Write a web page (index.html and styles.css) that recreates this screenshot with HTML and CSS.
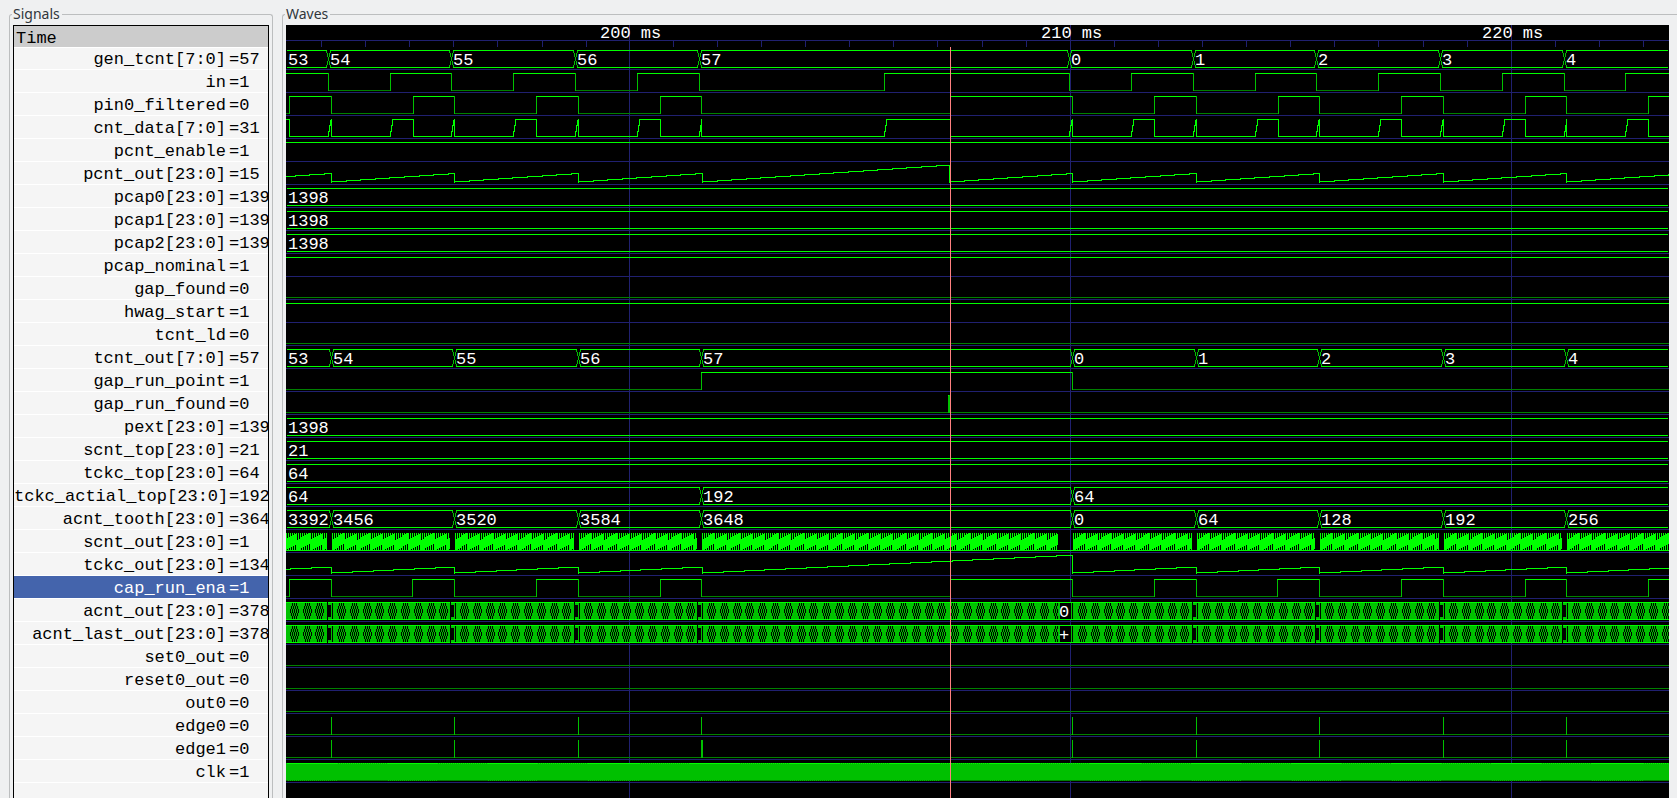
FILE: index.html
```html
<!DOCTYPE html>
<html lang="en">
<head>
<meta charset="utf-8">
<title>Waves</title>
<link rel="stylesheet" href="styles.css">
</head>
<body>
<main class="viewer">
  <fieldset class="frame frame-signals">
    <legend class="frame-title">Signals</legend>
    <div class="signal-list">
      <table class="signals">
        <colgroup><col class="col-name"><col class="col-value"></colgroup>
        <thead><tr><th colspan="2">Time</th></tr></thead>
        <tbody>
          <tr><td>gen_tcnt[7:0]</td><td>=57</td></tr>
          <tr><td>in</td><td>=1</td></tr>
          <tr><td>pin0_filtered</td><td>=0</td></tr>
          <tr><td>cnt_data[7:0]</td><td>=31</td></tr>
          <tr><td>pcnt_enable</td><td>=1</td></tr>
          <tr><td>pcnt_out[23:0]</td><td>=15</td></tr>
          <tr><td>pcap0[23:0]</td><td>=139</td></tr>
          <tr><td>pcap1[23:0]</td><td>=139</td></tr>
          <tr><td>pcap2[23:0]</td><td>=139</td></tr>
          <tr><td>pcap_nominal</td><td>=1</td></tr>
          <tr><td>gap_found</td><td>=0</td></tr>
          <tr><td>hwag_start</td><td>=1</td></tr>
          <tr><td>tcnt_ld</td><td>=0</td></tr>
          <tr><td>tcnt_out[7:0]</td><td>=57</td></tr>
          <tr><td>gap_run_point</td><td>=1</td></tr>
          <tr><td>gap_run_found</td><td>=0</td></tr>
          <tr><td>pext[23:0]</td><td>=139</td></tr>
          <tr><td>scnt_top[23:0]</td><td>=21</td></tr>
          <tr><td>tckc_top[23:0]</td><td>=64</td></tr>
          <tr><td>tckc_actial_top[23:0]</td><td>=192</td></tr>
          <tr><td>acnt_tooth[23:0]</td><td>=364</td></tr>
          <tr><td>scnt_out[23:0]</td><td>=1</td></tr>
          <tr><td>tckc_out[23:0]</td><td>=134</td></tr>
          <tr class="selected"><td>cap_run_ena</td><td>=1</td></tr>
          <tr><td>acnt_out[23:0]</td><td>=378</td></tr>
          <tr><td>acnt_last_out[23:0]</td><td>=378</td></tr>
          <tr><td>set0_out</td><td>=0</td></tr>
          <tr><td>reset0_out</td><td>=0</td></tr>
          <tr><td>out0</td><td>=0</td></tr>
          <tr><td>edge0</td><td>=0</td></tr>
          <tr><td>edge1</td><td>=0</td></tr>
          <tr><td>clk</td><td>=1</td></tr>
        </tbody>
      </table>
    </div>
  </fieldset>
  <fieldset class="frame frame-waves">
    <legend class="frame-title">Waves</legend>
    <svg class="waves" id="waves" role="img" aria-label="Signal waveforms"></svg>
  </fieldset>
</main>
<script src="waves.js"></script>
</body>
</html>
```
FILE: styles.css
```css
* {
  box-sizing: border-box;
}

body {
  margin: 0;
  background: #eff0f1;
  color: #000;
  overflow: hidden;
}

.viewer {
  display: flex;
  gap: 9px;
  height: 100vh;
  padding: 4px 0 0 9px;
}

.frame {
  margin: 0;
  min-width: 0;
  border: 1px solid #bcbebf;
  border-bottom: 0;
  border-radius: 3px 3px 0 0;
  padding: 1px 3px 0;
}

.frame-signals {
  flex: none;
  width: 264px;
}

.frame-waves {
  flex: 1;
  border-right: 0;
  border-top-right-radius: 0;
  padding-right: 8px;
}

.frame-title {
  margin-left: -1px;
  padding: 0 2px 0 1px;
  font: 14px/20px "Noto Sans", sans-serif;
  color: #31363b;
}

.signal-list {
  height: 100%;
  overflow: hidden;
  border: 1px solid #000;
  border-bottom: 0;
  background: #f5f5f5;
}

.signals {
  width: 100%;
  table-layout: fixed;
  border-collapse: separate;
  border-spacing: 0;
  font: 17px/19px "Liberation Mono", monospace;
}

.col-name {
  width: 215px;
}

.signals th {
  height: 22px;
  padding: 4px 0 0 2px;
  border-bottom: 1px solid #fff;
  background: #ccc;
  font-weight: normal;
  line-height: 17px;
  text-align: left;
}

.signals td {
  padding: 3px 0 0;
  border-bottom: 1px solid #fff;
  white-space: nowrap;
}

.signals td:first-child {
  padding-right: 3px;
  text-align: right;
}

.signals tbody tr:first-child td {
  padding-top: 2px;
}

.signals .selected td {
  background: #4464ac;
  color: #fff;
}

.waves {
  display: block;
  width: 100%;
  height: 100%;
  background: #000;
}

.waves path {
  fill: none;
  stroke-width: 1;
  shape-rendering: crispEdges;
}

.waves rect {
  shape-rendering: crispEdges;
}

.waves text {
  font: 17px "Liberation Mono", monospace;
  fill: #fff;
}

.waves .grid { stroke: #202070; }
.waves .high { stroke: #00ff00; }
.waves .edge { stroke: #00c000; }
.waves .low { stroke: #008000; }
.waves .cursor { stroke: #ff8080; }
.waves .void { stroke: #000; }
.waves .body { fill: #00c000; }
.waves .blank { fill: #000; }
```
FILE: waves.js
```js
const NS = "http://www.w3.org/2000/svg";
const svg = document.getElementById("waves");
const LEFT = 286;
const TOP = 25;
const RIGHT = LEFT + svg.clientWidth;
const BOTTOM = TOP + svg.clientHeight;
const PITCH = 23;

const root = document.createElementNS(NS, "g");
root.setAttribute("transform", `translate(${-LEFT} ${-TOP})`);
svg.appendChild(root);

function add(name, attrs, text) {
  const node = document.createElementNS(NS, name);
  for (const key in attrs) node.setAttribute(key, attrs[key]);
  if (text !== undefined) node.textContent = text;
  root.appendChild(node);
}

// Strokes are collected per colour, then flushed as one path.
let pen = {};
function h(cls, x1, x2, y) {
  pen[cls] = (pen[cls] || "") + `M${x1} ${y + 0.5}H${x2}`;
}
function v(cls, x, y1, y2) {
  pen[cls] = (pen[cls] || "") + `M${x + 0.5} ${Math.min(y1, y2)}V${Math.max(y1, y2) + 1}`;
}
function flush() {
  for (const cls of ["grid", "low", "edge", "high", "void", "cursor"]) {
    if (pen[cls]) add("path", { class: cls, d: pen[cls] });
  }
  pen = {};
}

const topOf = row => 50 + PITCH * row;
const bottomOf = row => 67 + PITCH * row;

// Event positions on the time axis.
const inFall = [328, 451, 575, 699, 1069, 1193, 1316, 1440, 1564];
const inRise = [390, 513, 637, 884, 1131, 1255, 1378, 1502, 1625];
const capFall = [331, 454, 578, 701, 1072, 1196, 1319, 1443, 1566];
const capRise = [289, 413, 536, 660, 950, 1154, 1278, 1401, 1525, 1648];
const enaRise = [289, 412, 536, 660, 950, 1154, 1277, 1401, 1525, 1648];

function digital(row, rises, falls, startHigh) {
  const events = [...rises.map(x => [x, 1]), ...falls.map(x => [x, 0])].sort((a, b) => a[0] - b[0]);
  let x = LEFT;
  let level = startHigh;
  for (const [at, next] of [...events, [RIGHT, null]]) {
    h(level ? "high" : "low", x, at, level ? topOf(row) : bottomOf(row));
    if (next !== null) v("edge", at, topOf(row), bottomOf(row));
    x = at;
    level = next;
  }
}

function bus(row, values, changes) {
  const t = topOf(row), b = bottomOf(row);
  let x = LEFT + 1;
  [...changes, RIGHT + 1].forEach((at, i) => {
    const end = i < changes.length ? at - 1 : RIGHT - 1;
    h("high", x, end, t);
    h("high", x, end, b);
    if (i < changes.length) {
      const steps = [[-2, 0, 2], [-1, 3, 6], [0, 7, 10], [1, 11, 14], [2, 15, 17]];
      for (const [dx, y1, y2] of steps) {
        v("edge", at + dx, t + y1, t + y2);
        v("edge", at - dx, t + y1, t + y2);
      }
      x = at + 2;
    }
  });
  values.forEach((value, i) => {
    labels.push([i ? changes[i - 1] + 2 : LEFT + 2, b - 2, value]);
  });
}

// Rising staircase that drops back at every reset.
function stairs(row, resets, step, base, first) {
  const starts = [first, ...resets];
  starts.forEach((start, i) => {
    const end = i + 1 < starts.length ? starts[i + 1] : RIGHT;
    let y = base;
    let x = start;
    for (let k = 1; x < end; k++) {
      const next = Math.min(Math.round(start + step * k), end);
      if (next > LEFT) h("high", Math.max(x, LEFT), next + (next < end ? 1 : 0), y);
      x = next;
      y -= 1;
    }
    if (end < RIGHT) v("high", end, y + 1, bottomOf(row));
  });
}

const labels = [];

// Time grid
h("grid", LEFT, RIGHT, 40);
for (const x of [321, 365, 409, 453, 497, 542, 586, 673, 717, 761, 805, 849, 893, 937, 982, 1026,
  1114, 1158, 1202, 1246, 1290, 1334, 1378, 1423, 1467, 1555, 1599, 1643]) v("grid", x, 40, 46);
for (const x of [629, 1070, 1511]) v("grid", x, TOP, BOTTOM);
for (let row = 0; row < 32; row++) h("grid", LEFT, RIGHT, 69 + PITCH * row);
flush();
labels.push([600, 38, "200 ms"], [1041, 38, "210 ms"], [1482, 38, "220 ms"]);

const teeth = ["53", "54", "55", "56", "57", "0", "1", "2", "3", "4"];
bus(0, teeth, inFall);
digital(1, inRise, inFall, 1);
digital(2, capRise, capFall, 0);

// cnt_data: short ramps at each input edge
{
  const t = topOf(3), b = bottomOf(3);
  h("high", LEFT, 290, t);
  v("high", 289, t, b);
  let x = 289;
  const events = [...inFall.map(e => [e, 0]), ...inRise.map(e => [e, 1])].sort((p, q) => p[0] - q[0]);
  for (const [at, rising] of events) {
    h("high", x, at + 1, b);
    v("high", at, b - 5, b);
    v("high", at + 1, b - 11, b - 5);
    v("high", at + 2, t + 1, b - 11);
    const until = rising ? capRise.find(c => c > at) : capFall.find(c => c > at);
    if (rising) h("high", at + 2, until + 1, t);
    v("high", until, t, b);
    x = until;
  }
  h("high", x, RIGHT, b);
}

digital(4, [], [], 1);
stairs(5, [331, 454, 578, 702, 949, 1072, 1196, 1319, 1443, 1566], 14.6, 181, 207);
bus(6, ["1398"], []);
bus(7, ["1398"], []);
bus(8, ["1398"], []);
digital(9, [], [], 1);
digital(10, [], [], 0);
digital(11, [], [], 1);
digital(12, [], [], 0);
bus(13, teeth, capFall);
digital(14, [701], [1072], 0);
digital(15, [948], [949], 0);
v("edge", 949, topOf(15), bottomOf(15));
bus(16, ["1398"], []);
bus(17, ["21"], []);
bus(18, ["64"], []);
bus(19, ["64", "192", "64"], [701, 1072]);
bus(20, ["3392", "3456", "3520", "3584", "3648", "0", "64", "128", "192", "256"], capFall);
stairs(22, [331, 454, 578, 702, 1072, 1196, 1319, 1443, 1566], 20.8, 572, 207);
digital(23, enaRise, capFall, 0);
for (const row of [26, 27, 28]) digital(row, [], [], 0);
for (const row of [29, 30]) {
  digital(row, [], [], 0);
  for (const x of capFall) v("edge", x, topOf(row), bottomOf(row));
}
v("edge", 702, topOf(30), bottomOf(30));
flush();

// Runs of fast counting, separated by short idle stretches.
const starts = [207, ...capFall];
const runs = starts.map((start, i) => [start + 1, i + 1 < starts.length ? starts[i + 1] - (starts[i + 1] === 1072 ? 14 : 4) : RIGHT]);
const BEAT = 12.8;

// scnt_out
{
  const t = topOf(21), b = bottomOf(21);
  h("high", LEFT, RIGHT, b);
  for (const [from, to] of runs) {
    for (let x = Math.max(from, LEFT); x < to; x++) {
      const phase = (((x - from) / BEAT) + 0.1) % 1;
      if ((x - from) % 2) {
        v("high", x, t + Math.round(7 * (1 - phase)), b - Math.round(7 * phase));
      } else {
        v("high", x, t, b);
      }
    }
  }
  flush();
}

// acnt_out and acnt_last_out
for (const row of [24, 25]) {
  const t = topOf(row), b = bottomOf(row);
  add("rect", { class: "body", x: LEFT, y: t, width: RIGHT - LEFT, height: 18 });
  h("high", LEFT, RIGHT, t);
  h("high", LEFT, RIGHT, b);
  flush();
  for (const [from, to] of runs) {
    for (let cell = from + 5; cell < to; cell += BEAT) {
      const x0 = Math.round(cell);
      for (let i = 0; i < 9; i++) {
        const x = x0 + i;
        if (x < LEFT || x >= to) continue;
        if (i % 2) {
          v("void", x, t + 4, t + 6);
          v("void", x, t + 11, t + 13);
        } else {
          v("void", x, t + 7, t + 10);
          if (i > 0 && i < 8) {
            v("void", x, t + 1, t + 3);
            v("void", x, t + 14, t + 16);
          }
        }
      }
    }
    if (to < RIGHT) {
      const wide = to === 1058;
      add("rect", { class: "blank", x: wide ? to + 2 : to, y: t + (wide ? 1 : 3), width: wide ? 11 : 4, height: wide ? 16 : 12 });
      v("void", to + (wide ? 14 : 5), t + 1, b - 1);
      if (!wide) v("void", to, t, b);
    }
  }
  flush();
}
labels.push([1059, bottomOf(24) - 2, "0"], [1059, bottomOf(25) - 2, "+"]);

// clk: solid fill, its outline alternates between solid and dotted
{
  const t = topOf(31), b = bottomOf(31);
  add("rect", { class: "body", x: LEFT, y: t, width: RIGHT - LEFT, height: 18 });
  for (let x = LEFT; x < RIGHT; x++) {
    const dottedTop = ((x - 337 + 1004) % 100.4) < 50;
    if (!dottedTop || x % 2) h("high", x, x + 1, t);
    if (dottedTop || x % 2) h("low", x, x + 1, b);
  }
  flush();
}

v("cursor", 950, 47, BOTTOM);
flush();
for (const [x, y, value] of labels) add("text", { x, y }, value);
```
